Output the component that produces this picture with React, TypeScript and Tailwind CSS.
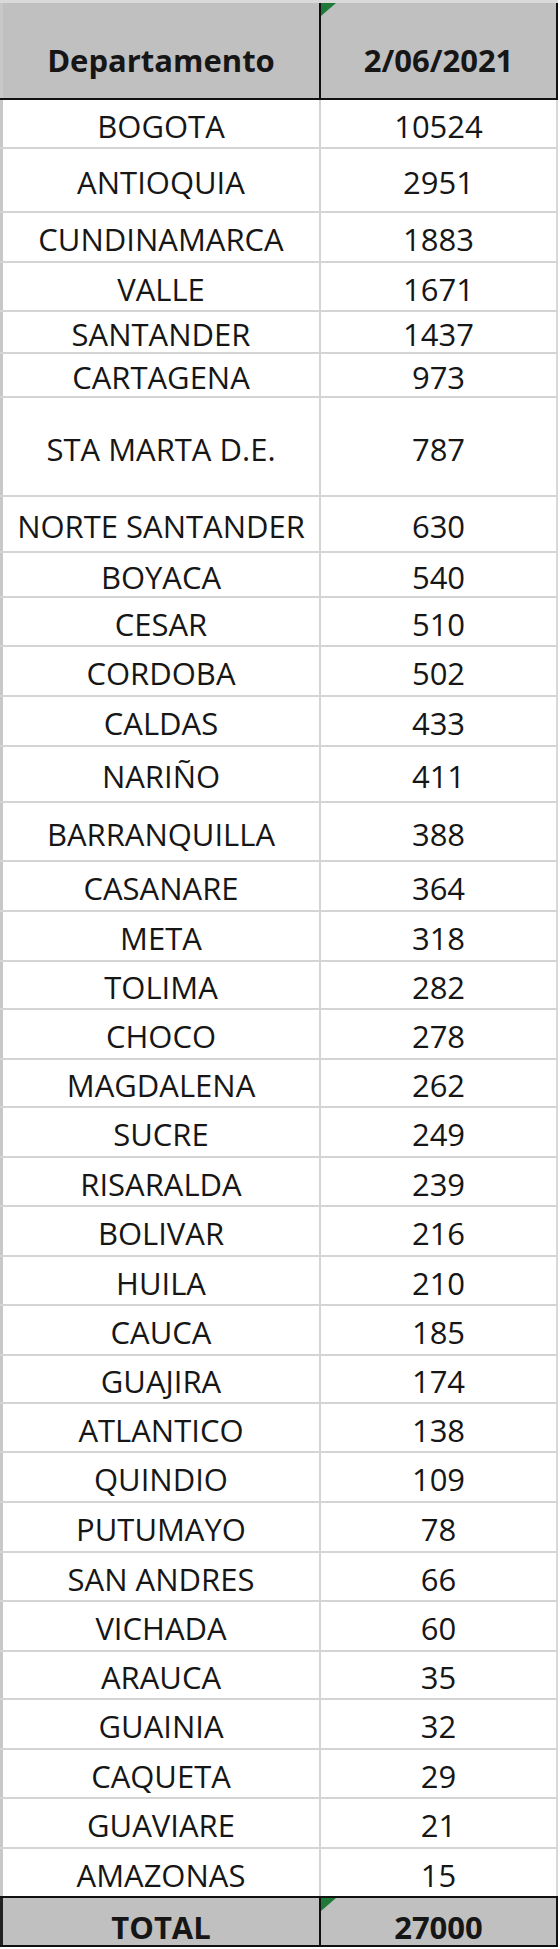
const rows: { name: string; value: string; h: string }[] = [
  { name: "BOGOTA", value: "10524", h: "h-[49px]" },
  { name: "ANTIOQUIA", value: "2951", h: "h-[64px]" },
  { name: "CUNDINAMARCA", value: "1883", h: "h-[50px]" },
  { name: "VALLE", value: "1671", h: "h-[49px]" },
  { name: "SANTANDER", value: "1437", h: "h-[42px]" },
  { name: "CARTAGENA", value: "973", h: "h-[44px]" },
  { name: "STA MARTA D.E.", value: "787", h: "h-[99px]" },
  { name: "NORTE SANTANDER", value: "630", h: "h-[56px]" },
  { name: "BOYACA", value: "540", h: "h-[45px]" },
  { name: "CESAR", value: "510", h: "h-[49px]" },
  { name: "CORDOBA", value: "502", h: "h-[50px]" },
  { name: "CALDAS", value: "433", h: "h-[50px]" },
  { name: "NARIÑO", value: "411", h: "h-[56px]" },
  { name: "BARRANQUILLA", value: "388", h: "h-[59px]" },
  { name: "CASANARE", value: "364", h: "h-[50px]" },
  { name: "META", value: "318", h: "h-[50px]" },
  { name: "TOLIMA", value: "282", h: "h-[48px]" },
  { name: "CHOCO", value: "278", h: "h-[50px]" },
  { name: "MAGDALENA", value: "262", h: "h-[48px]" },
  { name: "SUCRE", value: "249", h: "h-[50px]" },
  { name: "RISARALDA", value: "239", h: "h-[49px]" },
  { name: "BOLIVAR", value: "216", h: "h-[50px]" },
  { name: "HUILA", value: "210", h: "h-[49px]" },
  { name: "CAUCA", value: "185", h: "h-[50px]" },
  { name: "GUAJIRA", value: "174", h: "h-[48px]" },
  { name: "ATLANTICO", value: "138", h: "h-[49px]" },
  { name: "QUINDIO", value: "109", h: "h-[50px]" },
  { name: "PUTUMAYO", value: "78", h: "h-[50px]" },
  { name: "SAN ANDRES", value: "66", h: "h-[49px]" },
  { name: "VICHADA", value: "60", h: "h-[50px]" },
  { name: "ARAUCA", value: "35", h: "h-[48px]" },
  { name: "GUAINIA", value: "32", h: "h-[50px]" },
  { name: "CAQUETA", value: "29", h: "h-[49px]" },
  { name: "GUAVIARE", value: "21", h: "h-[50px]" },
  { name: "AMAZONAS", value: "15", h: "h-[49px]" },
];

function GreenCorner() {
  return (
    <svg
      className="absolute left-0 top-0"
      width="15"
      height="13"
      viewBox="0 0 15 13"
      aria-hidden
    >
      <path d="M0 0H15L0 13Z" fill="#1f7a38" />
    </svg>
  );
}

export default function App() {
  return (
    <div
      className="min-h-[1949px] w-[560px] bg-white text-[31px] leading-none text-[#161616]"
      style={{ fontFamily: '"Open Sans", "Liberation Sans", sans-serif' }}
    >
      {/* header */}
      <div className="flex h-[100px] w-[558px] border-b-2 border-t-[3px] border-b-[#111] border-t-[#dadada] bg-[#c0c0c0] font-bold">
        <div className="w-[321px] border-l-[3px] border-r-2 border-l-[#c8c8c8] border-r-[#111] pt-[42px] text-center">
          Departamento
        </div>
        <div className="relative flex-1 border-r-2 border-r-[#111] pt-[42px] text-center">
          <GreenCorner />
          2/06/2021
        </div>
      </div>

      {/* data rows */}
      {rows.map((r, i) => {
        const last = i === rows.length - 1;
        return (
          <div
            key={r.name}
            className={`flex w-[558px] border-b-2 ${r.h} ${
              last ? "border-b-[#111]" : "border-b-[#d4d4d4]"
            }`}
          >
            <div className="flex w-[321px] items-center justify-center border-l-[3px] border-r-2 border-l-[#c8c8c8] border-r-[#d4d4d4] pt-[5px]">
              {r.name}
            </div>
            <div className="flex flex-1 items-center justify-center border-r-2 border-r-[#d8d8d8] pt-[5px]">
              {r.value}
            </div>
          </div>
        );
      })}

      {/* total */}
      <div className="flex h-[49px] w-[558px] border-b-2 border-b-[#111] bg-[#c0c0c0] font-bold">
        <div className="flex w-[321px] items-center justify-center border-l-[3px] border-r-2 border-l-[#222] border-r-[#111] pt-[11px]">
          TOTAL
        </div>
        <div className="relative flex flex-1 items-center justify-center border-r-2 border-r-[#111] pt-[11px]">
          <GreenCorner />
          27000
        </div>
      </div>
    </div>
  );
}
